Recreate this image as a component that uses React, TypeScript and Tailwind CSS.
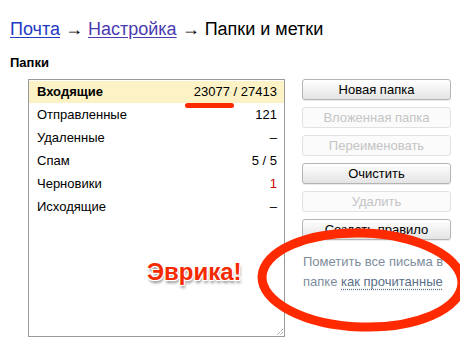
import React from "react";

type Folder = { name: string; count: string; red?: boolean };

const FOLDERS: Folder[] = [
  { name: "Входящие", count: "23077 / 27413" },
  { name: "Отправленные", count: "121" },
  { name: "Удаленные", count: "–" },
  { name: "Спам", count: "5 / 5" },
  { name: "Черновики", count: "1", red: true },
  { name: "Исходящие", count: "–" },
];

const BUTTONS: { label: string; disabled?: boolean }[] = [
  { label: "Новая папка" },
  { label: "Вложенная папка", disabled: true },
  { label: "Переименовать", disabled: true },
  { label: "Очистить" },
  { label: "Удалить", disabled: true },
  { label: "Создать правило" },
];

export default function App() {
  return (
    <div
      className="relative w-[460px] h-[360px] overflow-hidden bg-white text-black"
      style={{ fontFamily: '"Liberation Sans", Arial, sans-serif' }}
    >
      <div className="pl-[10px] pt-[18px] text-[18px] leading-[22px]">
        <a className="text-[#2239c4] underline underline-offset-2">Почта</a>
        <span> → </span>
        <a className="text-[#4a3bb0] underline underline-offset-2">Настройка</a>
        <span> → Папки и метки</span>
      </div>

      <div className="pl-[10px] mt-[15px] text-[13px] font-bold leading-[15px]">Папки</div>

      <div className="flex mt-[9px] pl-[28px]">
        <div className="relative w-[257px] h-[258px] border border-[#9a9a9a] pt-px">
          {FOLDERS.map((f, i) => (
            <div
              key={f.name}
              className={`flex items-center justify-between pl-[8px] pr-[7px] text-[13px] ${
                i === 0 ? "h-[22px] bg-[#fdf2c6] font-bold" : "h-[23px]"
              }`}
            >
              <span>{f.name}</span>
              <span className={`font-normal ${f.red ? "text-[#c00]" : ""}`}>{f.count}</span>
            </div>
          ))}
          {/* red marker under inbox count */}
          <div className="absolute left-[156px] top-[23px] w-[49px] h-[5px] rounded-full bg-[#ff2a00]" />
          {/* resize grip */}
          <svg className="absolute right-0 bottom-0" width="10" height="10" viewBox="0 0 10 10">
            <path d="M9 3 L3 9 M9 6 L6 9" stroke="#777" strokeWidth="1" strokeDasharray="1 1" />
          </svg>
        </div>

        <div className="ml-[17px] flex w-[149px] flex-col gap-[7px]">
          {BUTTONS.map((b) => (
            <button
              key={b.label}
              type="button"
              disabled={b.disabled}
              className={`h-[21px] rounded-[3px] border text-[13px] leading-[19px] ${
                b.disabled
                  ? "border-[#e2e2e2] bg-[#fbfbfb] text-[#c4c4c4]"
                  : "border-[#b4b4b4] bg-gradient-to-b from-white to-[#e4e4e4] text-black shadow-[0_1px_0_rgba(0,0,0,0.08)]"
              }`}
            >
              {b.label}
            </button>
          ))}
          <p className="mt-[5px] pl-px text-[13px] leading-[20px] text-[#7e8d9c]">
            Пометить все письма в папке{" "}
            <span className="text-[#5a6f88] underline decoration-dotted underline-offset-[3px]">
              как прочитанные
            </span>
          </p>
        </div>
      </div>

      <div
        className="absolute left-[147px] top-[258px] text-[24px] font-bold leading-[28px] text-[#f52a00]"
        style={{
          textShadow:
            "-1px -1px 0 #fff, 1px -1px 0 #fff, -1px 1px 0 #fff, 1px 1px 0 #fff, 1px 3px 3px rgba(0,0,0,0.45)",
        }}
      >
        Эврика!
      </div>

      <svg className="pointer-events-none absolute left-0 top-0" width="460" height="360">
        <ellipse
          cx="362"
          cy="280"
          rx="100"
          ry="47"
          fill="none"
          stroke="#ff2a00"
          strokeWidth="9"
          transform="rotate(2 362 280)"
        />
      </svg>
    </div>
  );
}
